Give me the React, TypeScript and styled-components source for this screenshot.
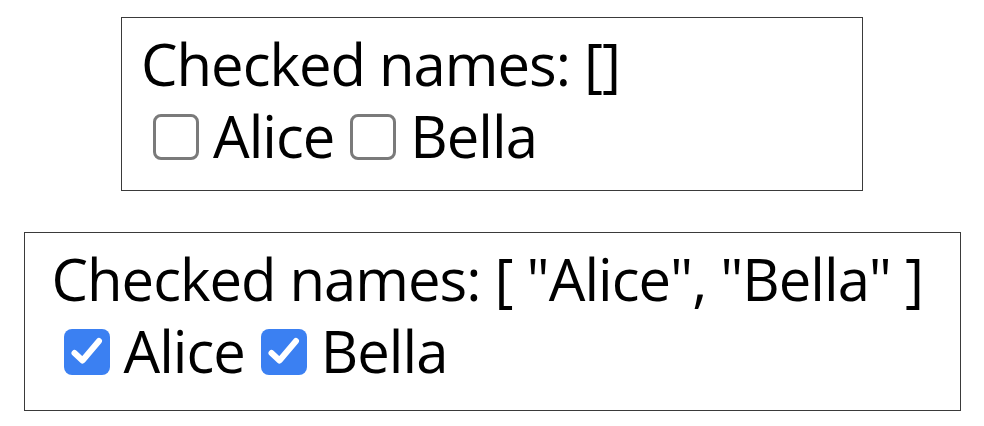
import React, { useState } from 'react';
import styled, { createGlobalStyle } from 'styled-components';

const GlobalStyle = createGlobalStyle`
  body {
    margin: 0;
    background: #ffffff;
    font-family: "Open Sans", "Noto Sans", sans-serif;
    color: #000000;
  }
`;

const Page = styled.div`
  display: flex;
  flex-direction: column;
  align-items: center;
  gap: 41px;
  padding-top: 17px;
`;

const Box = styled.div<{ $width: number; $padX: number; $padBottom: number }>`
  box-sizing: border-box;
  width: ${(p) => p.$width}px;
  border: 1px solid #3a3a3a;
  padding: 10px ${(p) => p.$padX}px ${(p) => p.$padBottom}px;
  font-size: 58px;
  letter-spacing: -1px;
  line-height: 72px;
`;

const Title = styled.div`
  white-space: nowrap;
`;

const Row = styled.div`
  display: flex;
  align-items: center;
  padding-left: 12px;
`;

const Label = styled.label`
  display: flex;
  align-items: center;
  gap: 14px;
  margin-right: 16px;
  cursor: pointer;
`;

const HiddenInput = styled.input`
  display: none;
`;

const Tick = styled.span<{ $on: boolean }>`
  box-sizing: border-box;
  width: 46px;
  height: 46px;
  border-radius: 8px;
  border: ${(p) => (p.$on ? 'none' : '3px solid #7a7a7a')};
  background: ${(p) => (p.$on ? '#3b80f2' : '#ffffff')};
  display: flex;
  align-items: center;
  justify-content: center;
  margin-top: 2px;

  svg {
    display: block;
  }
`;

const names = ['Alice', 'Bella'];

const CheckList: React.FC<{ initial: string[]; width: number; padX: number; padBottom: number }> = ({
  initial,
  width,
  padX,
  padBottom,
}) => {
  const [checked, setChecked] = useState<string[]>(initial);

  const toggle = (name: string) =>
    setChecked((prev) => (prev.includes(name) ? prev.filter((n) => n !== name) : [...prev, name]));

  const shown = checked.length ? `[ ${checked.map((n) => `"${n}"`).join(', ')} ]` : '[]';

  return (
    <Box $width={width} $padX={padX} $padBottom={padBottom}>
      <Title>Checked names: {shown}</Title>
      <Row>
        {names.map((name) => {
          const on = checked.includes(name);
          return (
            <Label key={name}>
              <HiddenInput type="checkbox" checked={on} onChange={() => toggle(name)} />
              <Tick $on={on}>
                {on && (
                  <svg width="46" height="46" viewBox="0 0 46 46">
                    <path
                      d="M10.5 24 L18.5 31.5 L35 12"
                      fill="none"
                      stroke="#ffffff"
                      strokeWidth="6"
                      strokeLinecap="round"
                      strokeLinejoin="round"
                    />
                  </svg>
                )}
              </Tick>
              <span>{name}</span>
            </Label>
          );
        })}
      </Row>
    </Box>
  );
};

const App: React.FC = () => (
  <>
    <GlobalStyle />
    <Page>
      <CheckList initial={[]} width={742} padX={19} padBottom={18} />
      <CheckList initial={['Alice', 'Bella']} width={937} padX={27} padBottom={23} />
    </Page>
  </>
);

export default App;
